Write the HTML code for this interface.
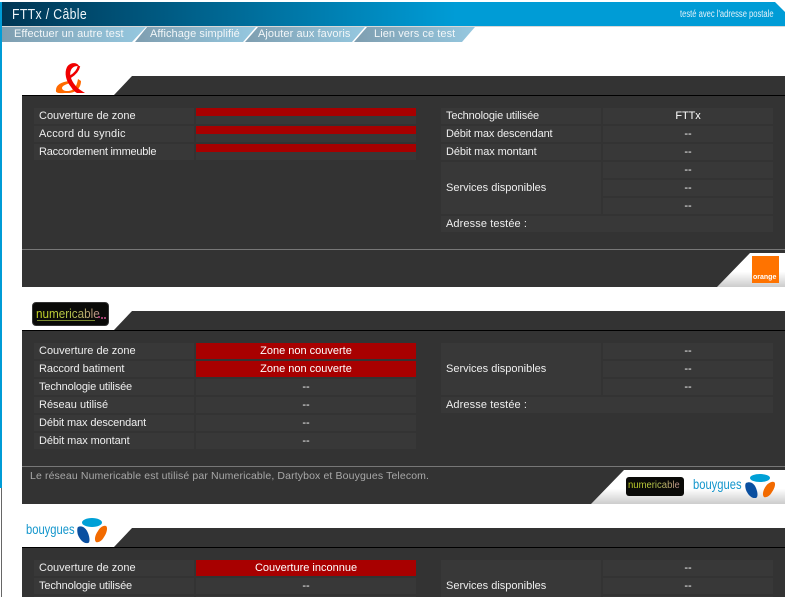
<!DOCTYPE html>
<html lang="fr">
<head>
<meta charset="utf-8">
<title>FTTx / Câble</title>
<style>
html,body{margin:0;padding:0;background:#fff;width:787px;height:597px;overflow:hidden}
#w{position:absolute;left:0;top:0;width:787px;height:597px;overflow:hidden;font:11px/16px "Liberation Sans",Arial,sans-serif;color:#eee}
div,span{position:absolute;box-sizing:border-box;white-space:nowrap}
.c{background:#383838;height:16px;padding-left:5px}
.l{left:34px;width:160px}
.v{left:196px;width:220px;text-align:center;padding:0;color:#fff}
.rl{left:441px;width:160px}
.rv{left:603px;width:170px;text-align:center;padding:0;color:#fff}
.red{background:#a80000}
.bar{left:196px;width:220px;height:8px;background:#a80000}
.tab{left:22px;width:763px;height:19px;background:#333;clip-path:polygon(92px 19px,110px 0,100% 0,100% 100%)}
.body{left:22px;width:763px;background:#333;border-top:1px solid #000}
.line{left:22px;width:763px;height:1px;background:#777}
.nav{top:27px;height:15px;background:linear-gradient(90deg,#7f9eb0,#95c8e0);color:#f2f6f8;font-size:11px;line-height:14px;letter-spacing:.07px}
.corner{background:linear-gradient(#fff 55%,#ccc)}
.nc{background:linear-gradient(90deg,#c8d820 0,#b8c850 55%,#c09090 100%);-webkit-background-clip:text;background-clip:text;color:transparent}
</style>
</head>
<body>
<div id="w">
<!-- side rails -->
<div style="left:0;top:2px;width:2px;height:486px;background:#009cd6"></div>
<div style="left:1px;top:488px;width:1px;height:109px;background:#666"></div>

<!-- header -->
<div style="left:2px;top:2px;width:783px;height:24px;background:linear-gradient(90deg,#003654 0,#009cd6 58%);clip-path:polygon(0 0,773px 0,100% 10px,100% 100%,0 100%)"></div>
<div style="left:2px;top:26px;width:783px;height:1px;background:#d8d8d8"></div>
<span style="left:12px;top:6px;font-size:15px;line-height:18px;color:#f0f6fa;letter-spacing:.4px;transform:scaleX(.82);transform-origin:0 0">FTTx / Câble</span>
<span style="left:680px;top:8px;font-size:10px;line-height:14px;color:#e4f2fa;transform:scaleX(.76);transform-origin:0 0">testé avec l'adresse postale</span>

<!-- nav -->
<div class="nav" style="left:2px;width:144px;clip-path:polygon(0 0,100% 0,130px 100%,0 100%)"><span style="left:12px;top:0">Effectuer un autre test</span></div>
<div class="nav" style="left:135px;width:121px;clip-path:polygon(12px 0,100% 0,108px 100%,0 100%)"><span style="left:15px;top:0">Affichage simplifié</span></div>
<div class="nav" style="left:245px;width:120px;clip-path:polygon(13px 0,100% 0,107px 100%,0 100%)"><span style="left:13px;top:0">Ajouter aux favoris</span></div>
<div class="nav" style="left:354px;width:121px;clip-path:polygon(13px 0,100% 0,108px 100%,0 100%)"><span style="left:20px;top:0">Lien vers ce test</span></div>

<!-- ORANGE PANEL -->
<svg style="position:absolute;left:55px;top:61px" width="32" height="34" viewBox="0 0 32 34">
<path d="M1 29C1 24 6 21 14 20L16 22C11 23 7 25 7 27C7 30 13 31 17 29C21 27 22 23 23 18L26 20C26 27 21 32 13 32C6 32 0 33 1 29Z" fill="#ff6a00"/>
<path d="M24 5C22 1 15 1 12 6C9 12 11 20 16 26C18 29 20 31 22 32L30 32C27 30 23 28 20 24C16 19 14 13 16 9C18 5 21 5 24 5Z" fill="#f00000"/>
<path d="M24 5C23 10 20 13 15 16" fill="none" stroke="#f00000" stroke-width="2.5"/>
</svg>
<div class="tab" style="top:76px"></div>
<div class="body" style="top:95px;height:192px"></div>
<div class="line" style="top:249px"></div>

<div class="c l" style="top:108px">Couverture de zone</div><div class="c v" style="top:108px"></div><div class="bar" style="top:108px"></div>
<div class="c l" style="top:126px;letter-spacing:.18px">Accord du syndic</div><div class="c v" style="top:126px"></div><div class="bar" style="top:126px"></div>
<div class="c l" style="top:144px;letter-spacing:-.24px">Raccordement immeuble</div><div class="c v" style="top:144px"></div><div class="bar" style="top:144px"></div>

<div class="c rl" style="top:108px;letter-spacing:-.15px">Technologie utilisée</div><div class="c rv" style="top:108px;letter-spacing:-.1px">FTTx</div>
<div class="c rl" style="top:126px;letter-spacing:-.15px">Débit max descendant</div><div class="c rv" style="top:126px">--</div>
<div class="c rl" style="top:144px;letter-spacing:-.1px">Débit max montant</div><div class="c rv" style="top:144px">--</div>
<div class="c rl" style="top:162px;height:52px;line-height:52px">Services disponibles</div>
<div class="c rv" style="top:162px">--</div><div class="c rv" style="top:180px">--</div><div class="c rv" style="top:198px">--</div>
<div class="c rl" style="top:216px;width:332px;letter-spacing:.1px">Adresse testée :</div>

<div class="corner" style="left:717px;top:253px;width:68px;height:34px;clip-path:polygon(33px 0,100% 0,100% 100%,0 100%)"></div>
<div style="left:752px;top:256px;width:27px;height:27px;background:#ff7300"><span style="left:1px;bottom:0;font:bold 7px/10px 'Liberation Sans',sans-serif;color:#fff">orange</span></div>

<!-- NUMERICABLE PANEL -->
<div style="left:32px;top:302px;width:77px;height:24px;background:#0a0a08;border-radius:4px;border:1px solid #333">
<span class="nc" style="left:3px;top:3px;font:13px/15px 'Liberation Sans',sans-serif;transform:scaleX(.9);transform-origin:0 0">numericable</span>
<span style="left:4px;top:17px;width:58px;height:1px;background:#7a8a30"></span>
<span style="left:65px;top:13px;width:2px;height:2px;background:#a04070"></span><span style="left:68px;top:14px;width:2px;height:2px;background:#a04070"></span><span style="left:71px;top:14px;width:2px;height:2px;background:#a04070"></span>
</div>
<div class="tab" style="top:311px"></div>
<div class="body" style="top:330px;height:174px"></div>
<div class="line" style="top:466px"></div>

<div class="c l" style="top:343px">Couverture de zone</div><div class="c v red" style="top:343px">Zone non couverte</div>
<div class="c l" style="top:361px;letter-spacing:-.05px">Raccord batiment</div><div class="c v red" style="top:361px">Zone non couverte</div>
<div class="c l" style="top:379px;letter-spacing:-.15px">Technologie utilisée</div><div class="c v" style="top:379px">--</div>
<div class="c l" style="top:397px">Réseau utilisé</div><div class="c v" style="top:397px">--</div>
<div class="c l" style="top:415px;letter-spacing:-.12px">Débit max descendant</div><div class="c v" style="top:415px">--</div>
<div class="c l" style="top:433px;letter-spacing:-.1px">Débit max montant</div><div class="c v" style="top:433px">--</div>

<div class="c rl" style="top:343px;height:52px;line-height:52px">Services disponibles</div>
<div class="c rv" style="top:343px">--</div><div class="c rv" style="top:361px">--</div><div class="c rv" style="top:379px">--</div>
<div class="c rl" style="top:397px;width:332px;letter-spacing:.1px">Adresse testée :</div>

<span style="left:30px;top:468px;color:#a8a8a8;font-size:10.5px;letter-spacing:.125px">Le réseau Numericable est utilisé par Numericable, Dartybox et Bouygues Telecom.</span>

<div class="corner" style="left:591px;top:470px;width:194px;height:34px;clip-path:polygon(33px 0,100% 0,100% 100%,0 100%)"></div>
<div style="left:626px;top:477px;width:58px;height:19px;background:#0a0a08;border-radius:3px">
<span class="nc" style="left:2px;top:3px;font:10px/12px 'Liberation Sans',sans-serif;transform:scaleX(.95);transform-origin:0 0">numericable</span></div>
<span style="left:693px;top:476px;font:14px/16px 'Liberation Sans',sans-serif;color:#1496cc;transform:scaleX(.8);transform-origin:0 0">bouygues</span>
<svg style="position:absolute;left:745px;top:474px" width="31" height="24" viewBox="0 0 31 24">
<ellipse cx="15" cy="4" rx="10" ry="4" fill="#00a0d6"/>
<path d="M1 9C5 7 9 9 11 14C13 19 13 23 11 24C7 25 3 21 1 16C0 13 0 10 1 9Z" fill="#0a4fa0"/>
<path d="M29 8C31 9 30 14 27 18C25 22 21 24 19 23C17 21 18 16 21 12C23 9 27 7 29 8Z" fill="#f26a00"/>
</svg>

<!-- BOUYGUES PANEL -->
<span style="left:26px;top:521px;font:14px/16px 'Liberation Sans',sans-serif;color:#1496cc;transform:scaleX(.8);transform-origin:0 0">bouygues</span>
<svg style="position:absolute;left:77px;top:518px" width="31" height="26" viewBox="0 0 31 26">
<ellipse cx="15" cy="4.5" rx="10" ry="4.5" fill="#00a0d6"/>
<path d="M1 9C5 7 9 10 11 15C13 20 13 25 11 25C7 26 3 22 1 17C0 14 0 10 1 9Z" fill="#0a4fa0"/>
<path d="M29 8C31 9 30 15 27 19C25 23 21 25 19 24C17 22 18 17 21 13C23 9 27 7 29 8Z" fill="#f26a00"/>
</svg>
<div class="tab" style="top:528px"></div>
<div class="body" style="top:547px;height:50px"></div>

<div class="c l" style="top:560px">Couverture de zone</div><div class="c v red" style="top:560px">Couverture inconnue</div>
<div class="c l" style="top:578px;letter-spacing:-.15px">Technologie utilisée</div><div class="c v" style="top:578px">--</div>
<div class="c l" style="top:596px"></div><div class="c v" style="top:596px"></div>

<div class="c rl" style="top:560px;height:52px;line-height:52px">Services disponibles</div>
<div class="c rv" style="top:560px">--</div><div class="c rv" style="top:578px">--</div><div class="c rv" style="top:596px"></div>
</div>
</body>
</html>
